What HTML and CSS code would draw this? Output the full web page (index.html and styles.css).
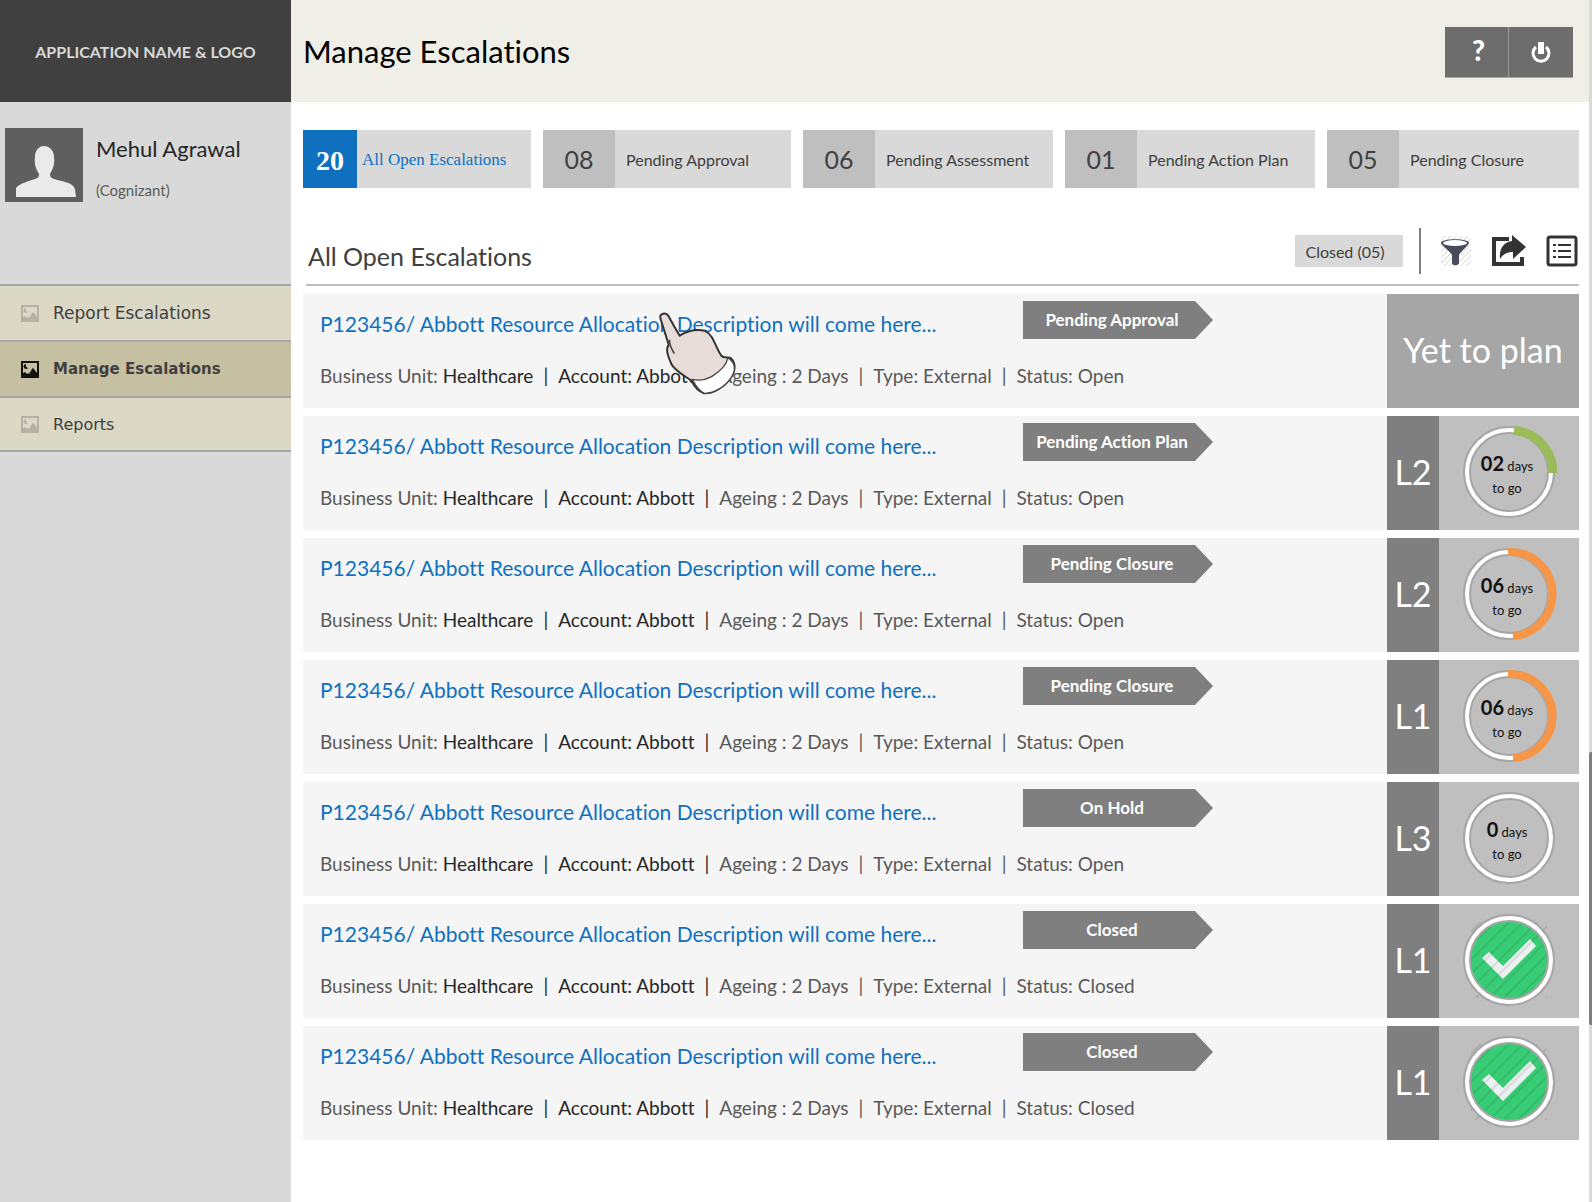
FILE: index.html
```html
<!DOCTYPE html>
<html lang="en">
<head>
<meta charset="utf-8">
<meta name="viewport" content="width=device-width, initial-scale=1">
<title>Manage Escalations</title>
<link rel="stylesheet" href="styles.css">
</head>
<body>
<svg class="sprite" aria-hidden="true">
  <defs>
    <pattern id="hatch" width="10" height="10" patternUnits="userSpaceOnUse" patternTransform="rotate(45)">
      <rect width="2" height="10" fill="#000" fill-opacity=".09"/>
    </pattern>
    <pattern id="hatch-fine" width="4" height="4" patternUnits="userSpaceOnUse" patternTransform="rotate(45)">
      <rect width="1" height="4" fill="#000" fill-opacity=".14"/>
    </pattern>
    <symbol id="picture" viewBox="0 0 18 17">
      <path fill="currentColor" fill-rule="evenodd" d="M0 0h18v17H0zM2 2v10l2-1 2 2 1-1 1 1 3-5 1-1 1 1 3 4V2z"/>
      <path fill="currentColor" d="M5 3a3 3 0 0 0 2 4 2.500 2.500 0 1 1-2-4z"/>
    </symbol>
    <symbol id="ring" viewBox="0 0 96 96">
      <circle cx="48" cy="48" r="42" fill="none" stroke="#a6a6a6" stroke-width="8"/>
      <circle cx="48" cy="48" r="42" fill="none" stroke="#fff" stroke-width="4"/>
    </symbol>
    <symbol id="ring-quarter" viewBox="0 0 96 96">
      <use href="#ring"/>
      <path d="M53 6.500A42 42 0 0 1 92 49" fill="none" stroke="#9bbb59" stroke-width="9"/>
    </symbol>
    <symbol id="ring-half" viewBox="0 0 96 96">
      <use href="#ring"/>
      <path d="M47 6A42 42 0 0 1 52 90" fill="none" stroke="#f79646" stroke-width="8"/>
    </symbol>
    <symbol id="done" viewBox="0 0 96 96">
      <path d="M10 10h76v76H10z" fill="url(#hatch)"/>
      <circle cx="48" cy="48" r="40" fill="#38cc75"/>
      <path d="M21 46l7-6 14 14 27-27 6 7-33 33z" fill="#ecf0f1"/>
      <circle cx="48" cy="48" r="40" fill="url(#hatch)"/>
      <use href="#ring"/>
    </symbol>
  </defs>
</svg>

<div class="app">
  <aside class="sidebar">
    <div class="brand">APPLICATION NAME &amp; LOGO</div>
    <div class="profile">
      <svg class="avatar" viewBox="0 0 78 74" aria-hidden="true">
        <path fill="#5f5f5f" d="M0 0h78v74H0z"/>
        <path fill="#eaeaea" d="M11 69v-9c4-5 13-7 19-9 3-1 4-2 4-5-3-5-5-10-4-17 0-7 4-11 9-11s10 4 10 11c1 7-1 12-4 17 0 3 1 4 4 5 6 2 19 3 21 10l1 8z"/>
      </svg>
      <div>
        <div class="profile-name">Mehul Agrawal</div>
        <div class="profile-org">(Cognizant)</div>
      </div>
    </div>
    <nav class="nav">
      <a class="nav-item" href="#report"><svg class="nav-icon" aria-hidden="true"><use href="#picture"/></svg>Report Escalations</a>
      <a class="nav-item nav-item-active" href="#manage" aria-current="page"><svg class="nav-icon" aria-hidden="true"><use href="#picture"/></svg>Manage Escalations</a>
      <a class="nav-item nav-item-small" href="#reports"><svg class="nav-icon" aria-hidden="true"><use href="#picture"/></svg>Reports</a>
    </nav>
  </aside>

  <div class="page">
    <header class="topbar">
      <h1>Manage Escalations</h1>
      <div class="topbar-actions">
        <button class="square help" type="button" aria-label="Help">?</button>
        <button class="square power" type="button" aria-label="Sign out">
          <svg width="22" height="24" viewBox="0 0 22 24" aria-hidden="true"><path d="M6 7a8 8 0 1 0 10 0" fill="none" stroke="#fff" stroke-width="3"/><path d="M8 2h6v12H8z" fill="#fff"/></svg>
        </button>
      </div>
    </header>

    <main class="content">
      <div class="tabs">
        <button class="tab tab-active" type="button"><span class="tab-count">20</span><span class="tab-label">All Open Escalations</span></button>
        <button class="tab" type="button"><span class="tab-count">08</span><span class="tab-label">Pending Approval</span></button>
        <button class="tab" type="button"><span class="tab-count">06</span><span class="tab-label">Pending Assessment</span></button>
        <button class="tab" type="button"><span class="tab-count">01</span><span class="tab-label">Pending Action Plan</span></button>
        <button class="tab" type="button"><span class="tab-count">05</span><span class="tab-label">Pending Closure</span></button>
      </div>

      <div class="list-head">
        <h2>All Open Escalations</h2>
        <div class="tools">
          <button class="closed" type="button">Closed (05)</button>
          <span class="divider"></span>
          <button class="tool" type="button" aria-label="Filter">
            <svg width="32" height="32" viewBox="0 0 32 32" aria-hidden="true"><path d="M1 1h30v30H1z" fill="url(#hatch-fine)"/><path d="M1 8c0-5 28-5 28 0 0 2-9 9-10 12v8c0 3-7 3-7 0v-8C11 17 1 10 1 8z" fill="#484b5b"/><ellipse cx="15" cy="8" rx="12" ry="3" fill="#fff"/></svg>
          </button>
          <button class="tool" type="button" aria-label="Share">
            <svg width="36" height="32" viewBox="0 0 36 32" aria-hidden="true"><path d="M18 4H3v25h28v-7" fill="none" stroke="#333" stroke-width="4"/><path d="M21 0l14 12-13 12v-7c-6 0-10 2-13 7-1-11 4-17 12-18z" fill="#333"/></svg>
          </button>
          <button class="tool" type="button" aria-label="List view">
            <svg width="32" height="32" viewBox="0 0 32 32" aria-hidden="true"><rect x="2" y="2" width="28" height="28" rx="2" fill="none" stroke="#333" stroke-width="3"/><path d="M7 10h3m2 0h13M7 16h3m2 0h13M7 22h3m2 0h13" stroke="#333" stroke-width="2"/></svg>
          </button>
        </div>
      </div>

      <div class="rows">
        <article class="row">
          <div class="row-body">
            <a class="row-title" href="#e1">P123456/ Abbott Resource Allocation Description will come here...</a>
            <span class="tag">Pending Approval</span>
            <div class="meta"><span>Business Unit: <b>Healthcare</b></span><b>|</b><b>Account: Abbott</b><b>|</b><span>Ageing : 2 Days</span><span>|</span><span>Type: External</span><span>|</span><span>Status: Open</span></div>
          </div>
          <div class="plan">Yet to plan</div>
          <svg class="hand" viewBox="0 0 330 330" aria-hidden="true">
            <path d="M61 54c-4-14 18-18 24-7 10 19 22 40 34 60 22-14 45-21 75-15 27 12 32 50 50 75 6 8 18 4 26 6 20 15 16 42 2 60-18 26-50 48-80 47-20-6-30-22-38-38-22-16-50-30-60-50-8-20-19-42-8-58z" fill="#e8dcd8" stroke="#333" stroke-width="6" stroke-linejoin="round"/>
            <path d="M263 174c-2 20-23 40-48 56-22 12-42 12-58 8 8 16 18 34 36 42 30 1 66-23 81-48 15-22 12-46-11-58z" fill="#fff" stroke="#444" stroke-width="4" stroke-linejoin="round"/>
            <path d="M89 119c-3 10 7 30 14 42" fill="none" stroke="#444" stroke-width="5"/>
          </svg>
        </article>

        <article class="row">
          <div class="row-body">
            <a class="row-title" href="#e2">P123456/ Abbott Resource Allocation Description will come here...</a>
            <span class="tag">Pending Action Plan</span>
            <div class="meta"><span>Business Unit: <b>Healthcare</b></span><b>|</b><b>Account: Abbott</b><b>|</b><span>Ageing : 2 Days</span><span>|</span><span>Type: External</span><span>|</span><span>Status: Open</span></div>
          </div>
          <div class="level">L2</div>
          <div class="gauge"><svg class="dial" aria-hidden="true"><use href="#ring-quarter"/></svg><p class="days"><strong>02</strong> days<br>to go</p></div>
        </article>

        <article class="row">
          <div class="row-body">
            <a class="row-title" href="#e3">P123456/ Abbott Resource Allocation Description will come here...</a>
            <span class="tag">Pending Closure</span>
            <div class="meta"><span>Business Unit: <b>Healthcare</b></span><b>|</b><b>Account: Abbott</b><b>|</b><span>Ageing : 2 Days</span><span>|</span><span>Type: External</span><span>|</span><span>Status: Open</span></div>
          </div>
          <div class="level">L2</div>
          <div class="gauge"><svg class="dial" aria-hidden="true"><use href="#ring-half"/></svg><p class="days"><strong>06</strong> days<br>to go</p></div>
        </article>

        <article class="row">
          <div class="row-body">
            <a class="row-title" href="#e4">P123456/ Abbott Resource Allocation Description will come here...</a>
            <span class="tag">Pending Closure</span>
            <div class="meta"><span>Business Unit: <b>Healthcare</b></span><b>|</b><b>Account: Abbott</b><b>|</b><span>Ageing : 2 Days</span><span>|</span><span>Type: External</span><span>|</span><span>Status: Open</span></div>
          </div>
          <div class="level">L1</div>
          <div class="gauge"><svg class="dial" aria-hidden="true"><use href="#ring-half"/></svg><p class="days"><strong>06</strong> days<br>to go</p></div>
        </article>

        <article class="row">
          <div class="row-body">
            <a class="row-title" href="#e5">P123456/ Abbott Resource Allocation Description will come here...</a>
            <span class="tag">On Hold</span>
            <div class="meta"><span>Business Unit: <b>Healthcare</b></span><b>|</b><b>Account: Abbott</b><b>|</b><span>Ageing : 2 Days</span><span>|</span><span>Type: External</span><span>|</span><span>Status: Open</span></div>
          </div>
          <div class="level">L3</div>
          <div class="gauge"><svg class="dial" aria-hidden="true"><use href="#ring"/></svg><p class="days"><strong>0</strong> days<br>to go</p></div>
        </article>

        <article class="row">
          <div class="row-body">
            <a class="row-title" href="#e6">P123456/ Abbott Resource Allocation Description will come here...</a>
            <span class="tag">Closed</span>
            <div class="meta"><span>Business Unit: <b>Healthcare</b></span><b>|</b><b>Account: Abbott</b><b>|</b><span>Ageing : 2 Days</span><span>|</span><span>Type: External</span><span>|</span><span>Status: Closed</span></div>
          </div>
          <div class="level">L1</div>
          <div class="gauge"><svg class="dial" aria-label="Done"><use href="#done"/></svg></div>
        </article>

        <article class="row">
          <div class="row-body">
            <a class="row-title" href="#e7">P123456/ Abbott Resource Allocation Description will come here...</a>
            <span class="tag">Closed</span>
            <div class="meta"><span>Business Unit: <b>Healthcare</b></span><b>|</b><b>Account: Abbott</b><b>|</b><span>Ageing : 2 Days</span><span>|</span><span>Type: External</span><span>|</span><span>Status: Closed</span></div>
          </div>
          <div class="level">L1</div>
          <div class="gauge"><svg class="dial" aria-label="Done"><use href="#done"/></svg></div>
        </article>
      </div>
    </main>
  </div>
  <div class="track"><div class="thumb"></div></div>
</div>
</body>
</html>
```
FILE: styles.css
```css
* {
  box-sizing: border-box;
}

body {
  margin: 0;
  font-family: Lato, "Liberation Sans", sans-serif;
  font-variant-ligatures: none;
  color: #404040;
  background: #fff;
}

h1,
h2,
p {
  margin: 0;
  font-weight: 400;
}

button {
  border: 0;
  padding: 0;
  font: inherit;
  font-variant-ligatures: none;
  color: inherit;
  background: none;
}

a {
  text-decoration: none;
}

.sprite {
  position: absolute;
  width: 0;
  height: 0;
}

.app {
  display: grid;
  grid-template-columns: 291px minmax(0, 1fr) 3px;
  min-height: 100vh;
}

/* Sidebar */
.sidebar {
  background: #d9d9d9;
}

.brand {
  display: flex;
  align-items: center;
  justify-content: center;
  height: 102px;
  background: #404040;
  color: #d9d9d9;
  font-size: 16px;
  font-weight: 700;
}

.profile {
  display: flex;
  gap: 13px;
  height: 182px;
  padding: 26px 5px;
}

.avatar {
  width: 78px;
  height: 74px;
}

.profile-name {
  font-size: 22px;
  line-height: 42px;
  color: #262626;
}

.profile-org {
  font-size: 15px;
  line-height: 40px;
  color: #595959;
}

.nav {
  border-bottom: 2px solid #a6a6a6;
}

.nav-item {
  display: flex;
  align-items: center;
  gap: 14px;
  height: 56px;
  padding-left: 21px;
  border-top: 2px solid #a6a6a6;
  background: #dbd8c6;
  color: #404040;
  font-family: "DejaVu Sans", sans-serif;
  font-size: 17px;
}

.nav-item-small {
  height: 54px;
  font-size: 16px;
}

.nav-item-active {
  background: #c6c0a2;
  font-size: 15px;
  font-weight: 700;
}

.nav-icon {
  width: 18px;
  height: 17px;
  color: #b4b1a6;
}

.nav-item-active .nav-icon {
  color: #111;
}

/* Top bar */
.topbar {
  display: flex;
  align-items: center;
  justify-content: space-between;
  height: 102px;
  padding: 0 16px 0 12px;
  background: #efefe7;
}

h1 {
  font-size: 31px;
  color: #000;
}

.topbar-actions {
  display: flex;
  padding-top: 2px;
}

.square {
  display: flex;
  align-items: center;
  justify-content: center;
  width: 64px;
  height: 51px;
  background: #6d6d6d;
  border-bottom: 1px solid #aaa;
  color: #fff;
}

.help {
  padding: 0 0 4px 4px;
  border-right: 1px solid #999;
  font-size: 28px;
  font-weight: 900;
}

/* Content */
.content {
  padding: 28px 10px 62px 12px;
}

.tabs {
  display: grid;
  grid-template-columns: 228fr 248fr 250fr 250fr 252fr;
  gap: 12px;
}

.tab {
  display: flex;
  align-items: center;
  height: 58px;
  background: #d9d9d9;
  font-size: 16px;
  white-space: nowrap;
}

.tab-count {
  flex: none;
  width: 72px;
  background: #bfbfbf;
  font-size: 25px;
  line-height: 58px;
}

.tab-label {
  padding-left: 11px;
}

.tab-active {
  font-family: "Liberation Serif", serif;
  font-size: 17px;
  color: #1070c0;
}

.tab-active .tab-count {
  width: 54px;
  height: 58px;
  padding-top: 2px;
  background: #1070c0;
  color: #fff;
  font-size: 28px;
  font-weight: 700;
}

.tab-active .tab-label {
  padding: 2px 0 0 5px;
}

.list-head {
  display: flex;
  align-items: center;
  justify-content: space-between;
  height: 98px;
  margin-left: 3px;
  padding: 32px 1px 0 2px;
  border-bottom: 2px solid #bfbfbf;
}

h2 {
  padding-top: 8px;
  font-size: 25px;
}

.tools {
  display: flex;
  align-items: center;
  margin-bottom: 2px;
}

.closed {
  width: 108px;
  height: 32px;
  padding-right: 8px;
  background: #d9d9d9;
  font-size: 16px;
}

.divider {
  width: 2px;
  height: 46px;
  margin: 0 0 0 16px;
  background: #7f7f7f;
}

.tool {
  display: flex;
  margin-left: 19px;
}

/* Escalation rows */
.rows {
  display: grid;
  gap: 8px;
  margin-top: 8px;
}

.row {
  position: relative;
  display: grid;
  grid-template-columns: minmax(0, 1fr) 52px 140px;
  min-height: 114px;
  background: #f5f5f5;
}

.row-body {
  display: grid;
  grid-template-columns: 703fr 364fr;
  grid-template-rows: 44px 24px;
  row-gap: 19px;
  padding: 7px 0 20px 17px;
}

.row-title {
  align-self: center;
  font-size: 21px;
  color: #1070c0;
  white-space: nowrap;
}

.tag {
  width: 190px;
  height: 38px;
  padding-right: 12px;
  background: #7f7f7f;
  clip-path: polygon(0 0, 172px 0, 100% 50%, 172px 100%, 0 100%);
  color: #fff;
  font-size: 17px;
  font-weight: 700;
  line-height: 38px;
  text-align: center;
}

.meta {
  display: flex;
  grid-column: 1 / -1;
  gap: 10px;
  font-size: 19px;
  line-height: 24px;
  color: #595959;
  white-space: nowrap;
}

.meta b {
  font-weight: 400;
  color: #262626;
}

.plan,
.level {
  display: flex;
  align-items: center;
  justify-content: center;
  padding-bottom: 4px;
  background: #7f7f7f;
  color: #fff;
  font-size: 34px;
}

.plan {
  grid-column: 2 / -1;
  background: #a6a6a6;
}

.gauge {
  display: grid;
  place-items: center;
  padding-bottom: 2px;
  background: #bfbfbf;
  color: #111;
}

.dial,
.days {
  grid-area: 1 / 1;
}

.dial {
  width: 96px;
  height: 96px;
}

.days {
  padding: 6px 4px 0 0;
  font-size: 13px;
  line-height: 22px;
  text-align: center;
}

.days strong {
  font-size: 20px;
}

.hand {
  position: absolute;
  top: 6px;
  left: 337px;
  width: 110px;
  height: 110px;
}

/* Page scroll indicator */
.track {
  display: flex;
  flex-direction: column;
  background: #d9d9d9;
}

.track::before {
  content: "";
  flex: 752;
}

.track::after {
  content: "";
  flex: 177;
}

.thumb {
  flex: 273;
  border-radius: 2px 0 0 2px;
  background: #7f7f7f;
}
```
